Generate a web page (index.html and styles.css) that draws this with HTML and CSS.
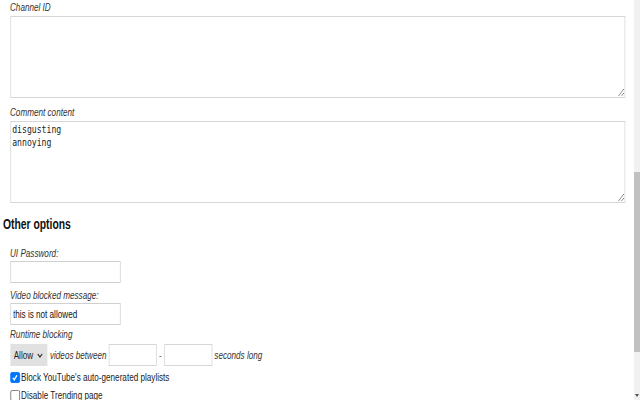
FILE: index.html
```html
<!DOCTYPE html>
<html lang="en">
<head>
<meta charset="utf-8">
<title>Options</title>
<link rel="stylesheet" href="styles.css">
</head>
<body>
<div class="viewport">
  <div class="content">
    <section class="block">
      <label class="field-label">Channel ID</label>
      <textarea class="list-box"></textarea>
      <label class="field-label">Comment content</label>
      <textarea class="list-box">disgusting
annoying</textarea>
    </section>
    <h2 class="section-title">Other options</h2>
    <section class="block">
      <label class="field-label opt-label">UI Password:</label>
      <input type="password" class="text-input">
      <label class="field-label opt-label">Video blocked message:</label>
      <input type="text" class="text-input text-input-last" value="this is not allowed">
      <label class="field-label opt-label runtime-label">Runtime blocking</label>
      <div class="runtime-row">
        <select class="mode-select"><option>Allow</option><option>Block</option></select>
        <span class="inline-note">videos between</span>
        <input type="text" class="num-input">
        <span class="dash">-</span>
        <input type="text" class="num-input">
        <span class="inline-note">seconds long</span>
      </div>
      <label class="check-row first-check"><input type="checkbox" class="check-box" checked><span>Block YouTube's auto-generated playlists</span></label>
      <label class="check-row"><input type="checkbox" class="check-box"><span>Disable Trending page</span></label>
    </section>
  </div>
</div>
<div class="scrollbar">
  <div class="scroll-gap-top"></div>
  <div class="scroll-thumb"></div>
  <div class="scroll-gap"></div>
  <div class="scroll-arrow"><span class="arrow-down"></span></div>
</div>
</body>
</html>
```
FILE: styles.css
```css
html, body {
  margin: 0;
  height: 100%;
}
body {
  display: flex;
  overflow: hidden;
  background: #fff;
  font-family: "Liberation Sans", Arial, sans-serif;
  color: #222;
}
.viewport {
  flex: 1;
  overflow: hidden;
}
.content {
  box-sizing: border-box;
  width: 857px;
  padding: 1px 0 0 4px;
  transform: scaleX(0.74);
  transform-origin: 0 0;
}
.block {
  padding-left: 9.5px;
}
.field-label {
  display: block;
  font-size: 11px;
  line-height: 13px;
  font-style: italic;
  color: #333;
  margin-bottom: 2px;
}
.opt-label {
  margin-bottom: 1px;
}
.runtime-label {
  margin-bottom: 3px;
}
.list-box {
  display: block;
  box-sizing: border-box;
  width: 831px;
  height: 82px;
  margin: 0 0 8px;
  padding: 1px 2px;
  border: 1px solid #d6d6d6;
  border-radius: 0;
  font: 11px/13px "DejaVu Sans Mono", monospace;
  color: #222;
  background: #fff;
  resize: vertical;
  outline: none;
}
.section-title {
  margin: 13px 0 15px;
  font-size: 14px;
  line-height: 16px;
  font-weight: bold;
  color: #111;
}
.text-input {
  display: block;
  box-sizing: border-box;
  width: 149px;
  height: 22px;
  margin: 0 0 6px;
  padding: 0 3px;
  border: 1px solid #d0d0d0;
  border-radius: 0;
  font: 11px "Liberation Sans", Arial, sans-serif;
  color: #111;
  outline: none;
}
.text-input-last {
  margin-bottom: 3px;
}
.runtime-row {
  display: flex;
  align-items: center;
  gap: 3px;
  height: 22px;
  font-size: 11px;
}
.mode-select {
  appearance: none;
  -webkit-appearance: none;
  box-sizing: border-box;
  width: 50px;
  height: 22px;
  margin: 0 1px 0 0;
  padding: 0 0 0 5px;
  border: none;
  border-radius: 0;
  background: #e1e1e1 url("data:image/svg+xml,%3Csvg xmlns='http://www.w3.org/2000/svg' viewBox='0 0 8 5'%3E%3Cpath d='M1 1 4 4 7 1' fill='none' stroke='%23333' stroke-width='1.3'/%3E%3C/svg%3E") no-repeat right 6px center / 8px 5px;
  font: 11px "Liberation Sans", Arial, sans-serif;
  color: #222;
}
.inline-note {
  font-style: italic;
  color: #333;
}
.num-input {
  box-sizing: border-box;
  width: 65px;
  height: 22px;
  margin: 0;
  border: 1px solid #d6d6d6;
  border-radius: 0;
  outline: none;
}
.dash {
  color: #666;
}
.check-row {
  display: flex;
  align-items: center;
  height: 18px;
  font-size: 11px;
  color: #222;
}
.first-check {
  margin-top: 2px;
}
.check-box {
  appearance: none;
  -webkit-appearance: none;
  box-sizing: border-box;
  width: 13px;
  height: 11px;
  margin: 0 2px 0 0;
  border: 1px solid #767676;
  border-radius: 2px;
  background: #fff;
}
.check-box:checked {
  border-color: #0075ff;
  background: #0075ff url("data:image/svg+xml,%3Csvg xmlns='http://www.w3.org/2000/svg' viewBox='0 0 10 10'%3E%3Cpath d='M2 5.3 4.2 7.5 8.3 2.5' fill='none' stroke='white' stroke-width='1.8'/%3E%3C/svg%3E") no-repeat center / 10px 9px;
}
.scrollbar {
  flex: none;
  width: 6px;
  display: flex;
  flex-direction: column;
  background: #f1f1f1;
}
.scroll-gap-top {
  height: 172px;
}
.scroll-thumb {
  height: 180px;
  background: #c1c1c1;
}
.scroll-gap {
  flex: 1;
}
.scroll-arrow {
  height: 10px;
  display: flex;
  align-items: center;
  justify-content: center;
}
.arrow-down {
  width: 0;
  height: 0;
  border-left: 2px solid transparent;
  border-right: 2px solid transparent;
  border-top: 3px solid #505050;
}
```
